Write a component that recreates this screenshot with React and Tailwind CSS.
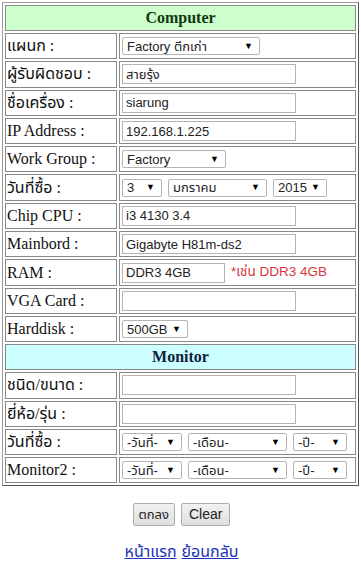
import React from "react";

const LBL = "font-['Liberation_Serif','Noto_Sans_Thai','Noto_Sans',serif] text-[16px] text-[#111]";
const INP = "font-['Liberation_Sans','Noto_Sans_Thai','Noto_Sans',sans-serif] text-[13px] text-[#222]";

function Field({ value = "", w = "w-[174px]" }) {
  return (
    <div className={`${w} h-[20px] border border-[#b4b4b4] bg-white px-[3px] flex items-center leading-none ${INP}`}>
      {value}
    </div>
  );
}

function Sel({ value, w }) {
  return (
    <div className={`${w} h-[18px] border border-[#b4b4b4] rounded-[2px] bg-white pl-[4px] pr-[6px] flex items-center justify-between leading-none ${INP}`}>
      <span>{value}</span>
      <span className="text-[9px] text-black">▼</span>
    </div>
  );
}

function Row({ label, children }) {
  return (
    <tr className="h-[26.3px]">
      <td className={`border border-[#888] px-[1px] py-0 w-[112px] ${LBL}`}>{label}</td>
      <td className="border border-[#888] px-[2px] py-0">
        <div className="flex items-center gap-[6px]">{children}</div>
      </td>
    </tr>
  );
}

function Header({ title, bg, color }) {
  return (
    <tr className="h-[25px]">
      <td colSpan={2} className={`border border-[#888] ${bg} text-center font-bold ${color} font-['Liberation_Serif',serif] text-[16px]`}>
        {title}
      </td>
    </tr>
  );
}

export default function App() {
  return (
    <div className="w-[361px] h-[565px] bg-white pt-[2px] pl-[2px]">
      <table className="border-separate border-spacing-[2px] border border-t-[#9a9a9a] border-l-[#9a9a9a] border-r-[#555] border-b-[#555] w-[357px]">
        <tbody>
          <Header title="Computer" bg="bg-[#ccffcc]" color="text-[#123812]" />
          <Row label="แผนก :"><Sel value="Factory ตึกเก่า" w="w-[138px]" /></Row>
          <Row label="ผู้รับผิดชอบ :"><Field value="สายรุ้ง" /></Row>
          <Row label="ชื่อเครื่อง :"><Field value="siarung" /></Row>
          <Row label="IP Address :"><Field value="192.168.1.225" /></Row>
          <Row label="Work Group :"><Sel value="Factory" w="w-[104px]" /></Row>
          <Row label="วันที่ซื้อ :">
            <Sel value="3" w="w-[40px]" />
            <Sel value="มกราคม" w="w-[99px]" />
            <Sel value="2015" w="w-[54px]" />
          </Row>
          <Row label="Chip CPU :"><Field value="i3 4130 3.4" /></Row>
          <Row label="Mainbord :"><Field value="Gigabyte H81m-ds2" /></Row>
          <Row label="RAM :">
            <Field value="DDR3 4GB" w="w-[103px]" />
            <span className="font-['Liberation_Sans','Noto_Sans_Thai','Noto_Sans',sans-serif] text-[13.5px] text-[#d9343a]">*เช่น DDR3 4GB</span>
          </Row>
          <Row label="VGA Card :"><Field /></Row>
          <Row label="Harddisk :"><Sel value="500GB" w="w-[66px]" /></Row>
          <Header title="Monitor" bg="bg-[#ccffff]" color="text-[#102040]" />
          <Row label="ชนิด/ขนาด :"><Field /></Row>
          <Row label="ยี่ห้อ/รุ่น :"><Field /></Row>
          <Row label="วันที่ซื้อ :">
            <Sel value="-วันที่-" w="w-[60px]" />
            <Sel value="-เดือน-" w="w-[99px]" />
            <Sel value="-ปี-" w="w-[54px]" />
          </Row>
          <Row label="Monitor2 :">
            <Sel value="-วันที่-" w="w-[60px]" />
            <Sel value="-เดือน-" w="w-[99px]" />
            <Sel value="-ปี-" w="w-[54px]" />
          </Row>
        </tbody>
      </table>
      <div className="flex justify-center gap-[6px] mt-[17px]">
        <button className={`h-[23px] px-[5px] border border-[#adadad] rounded-[2px] bg-gradient-to-b from-[#f2f2f2] to-[#dedede] ${INP}`}>ตกลง</button>
        <button className={`h-[23px] px-[7px] border border-[#adadad] rounded-[2px] bg-gradient-to-b from-[#f2f2f2] to-[#dedede] ${INP} text-[14px]`}>Clear</button>
      </div>
      <div className="flex justify-center gap-[5px] mt-[14px] font-['Liberation_Serif','Noto_Sans_Thai',serif] text-[16px]">
        <a href="#" className="text-[#2233b8] underline">หน้าแรก</a>
        <a href="#" className="text-[#2233b8] underline">ย้อนกลับ</a>
      </div>
    </div>
  );
}
